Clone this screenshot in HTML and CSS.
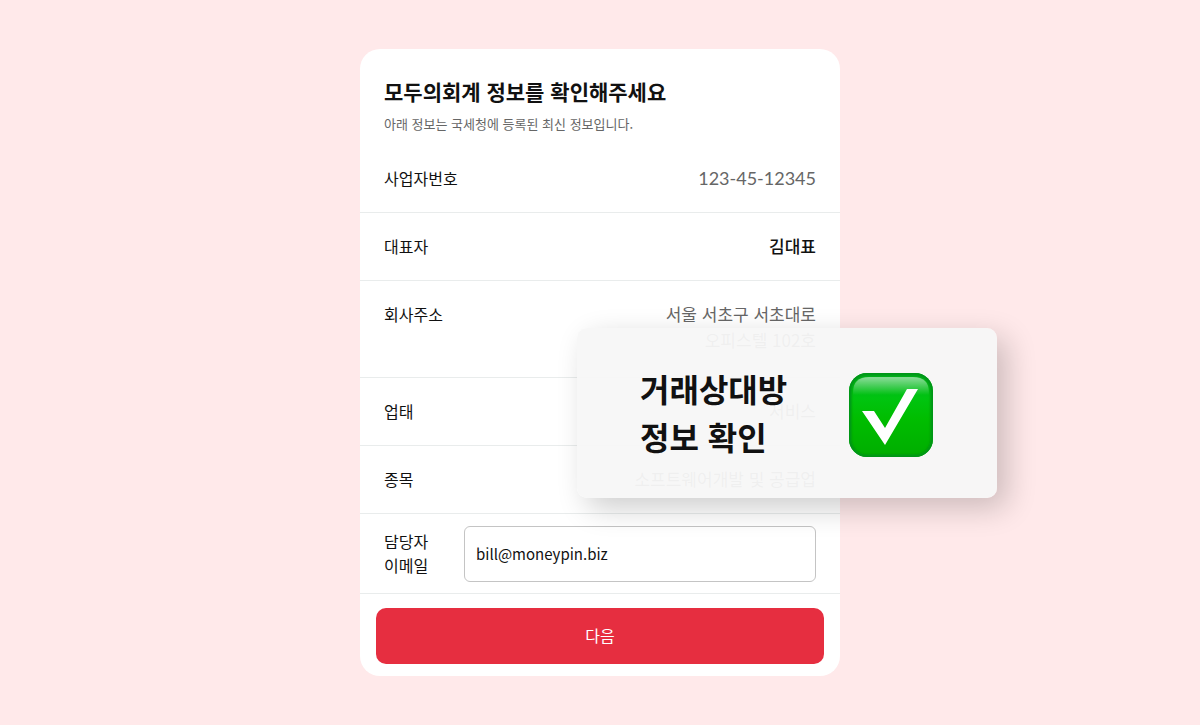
FILE: index.html
```html
<!DOCTYPE html>
<html lang="ko">
<head>
    <meta charset="UTF-8">
    <meta name="viewport" content="width=device-width, initial-scale=1.0">
    <title>거래상대방 정보 확인</title>
    <link rel="stylesheet" href="styles.css">
</head>
<body>

    <main class="wrap">
        <form class="card">
            <header class="card-header">
                <h1>모두의회계 정보를 확인해주세요</h1>
                <p>아래 정보는 국세청에 등록된 최신 정보입니다.</p>
            </header>

            <dl class="info">
                <div class="row">
                    <dt>사업자번호</dt>
                    <dd class="number">123-45-12345</dd>
                </div>
                <div class="row">
                    <dt>대표자</dt>
                    <dd class="strong">김대표</dd>
                </div>
                <div class="row address">
                    <dt>회사주소</dt>
                    <dd>서울 서초구 서초대로<br>오피스텔 102호</dd>
                </div>
                <div class="row">
                    <dt>업태</dt>
                    <dd>서비스</dd>
                </div>
                <div class="row">
                    <dt>종목</dt>
                    <dd>소프트웨어개발 및 공급업</dd>
                </div>
            </dl>

            <div class="email-row">
                <label for="email">담당자<br>이메일</label>
                <input type="email" id="email" value="bill@moneypin.biz">
            </div>

            <button type="button" class="next">다음</button>
        </form>

        <!-- Floating notice over the card -->
        <aside class="notice">
            <h2>거래상대방<br>정보 확인</h2>
            <svg class="check" viewBox="0 0 84 84" aria-hidden="true">
                <defs>
                    <linearGradient id="face" x1="0" y1="0" x2="0" y2="1">
                        <stop offset="0" stop-color="#00b020"/>
                        <stop offset="0.3" stop-color="#00c410"/>
                        <stop offset="0.55" stop-color="#00bd00"/>
                        <stop offset="1" stop-color="#00ad00"/>
                    </linearGradient>
                    <linearGradient id="shine" x1="0" y1="0" x2="0" y2="1">
                        <stop offset="0" stop-color="#fff" stop-opacity="0.55"/>
                        <stop offset="1" stop-color="#fff" stop-opacity="0"/>
                    </linearGradient>
                    <filter id="soft" x="-10%" y="-10%" width="120%" height="120%">
                        <feGaussianBlur stdDeviation="1"/>
                    </filter>
                    <clipPath id="tile">
                        <rect width="84" height="84" rx="18"/>
                    </clipPath>
                </defs>
                <g clip-path="url(#tile)">
                    <rect width="84" height="84" fill="url(#face)"/>
                    <path d="M4 20C4 9 9 4 20 4H64C75 4 80 9 80 20V22H4Z" fill="url(#shine)"/>
                    <rect width="84" height="84" rx="18" fill="none" stroke="#009412" stroke-width="5" filter="url(#soft)"/>
                </g>
                <path d="M13 38H25L36 55L58 16H69L36 72Z" fill="#fff"/>
            </svg>
        </aside>
    </main>

</body>
</html>
```

FILE: styles.css
```css
* {
    box-sizing: border-box;
}
body {
    margin: 0;
    min-height: 100vh;
    display: flex;
    justify-content: center;
    align-items: center;
    background-color: #ffe9ea;
    color: #111;
    font-family: "Noto Sans CJK KR", sans-serif;
    font-size: 16px;
    line-height: 24px;
}
h1, h2, p, dl, dd {
    margin: 0;
}
.wrap {
    position: relative;
    width: 100%;
    max-width: 480px;
}
.card {
    padding-bottom: 12px;
    background-color: #fff;
    border-radius: 20px;
}

/* Heading */
.card-header {
    padding: 26px 24px 11px;
}
.card-header h1 {
    font-size: 21px;
    line-height: 32px;
    font-weight: 700;
}
.card-header p {
    margin-top: 7px;
    font-size: 13px;
    line-height: 20px;
    color: #666;
}

/* Company info rows */
.row {
    display: flex;
    justify-content: space-between;
    padding: 20px 24px 21px;
    border-bottom: 1px solid #e9ecec;
}
.row dt, .row dd {
    line-height: 26px;
}
.row dd {
    font-size: 17px;
    color: #666;
    text-align: right;
}
.row .number {
    font-family: Lato, sans-serif;
    font-size: 18px;
}
.row .strong {
    font-weight: 500;
    color: #111;
}
.address {
    padding-bottom: 24px;
}

/* Email */
.email-row {
    display: flex;
    align-items: center;
    padding: 12px 24px 11px;
    border-bottom: 1px solid #e9ecec;
}
.email-row label {
    width: 80px;
    padding-bottom: 2px;
}
.email-row input {
    flex: 1;
    min-width: 0;
    height: 56px;
    padding: 0 11px 2px;
    border: 1px solid #c4c4c4;
    border-radius: 6px;
    background-color: #fff;
    color: #111;
    font: inherit;
    font-size: 15px;
}
.next {
    display: block;
    width: calc(100% - 32px);
    height: 56px;
    margin: 14px 16px 0;
    padding: 0 0 2px;
    border: none;
    border-radius: 10px;
    background-color: #e62e40;
    color: #fff;
    font: inherit;
    cursor: pointer;
}

/* Notice */
.notice {
    position: absolute;
    top: 279px;
    left: 217px;
    width: 420px;
    display: flex;
    justify-content: space-between;
    align-items: flex-end;
    padding: 36px 64px 38px 63px;
    border-radius: 10px;
    background-color: rgba(247, 247, 247, 0.95);
    box-shadow: 10px 10px 30px rgba(0, 0, 0, 0.2);
}
.notice h2 {
    font-size: 32px;
    line-height: 48px;
    font-weight: 700;
}
.check {
    width: 84px;
    height: 84px;
    margin-bottom: 3px;
}
```
